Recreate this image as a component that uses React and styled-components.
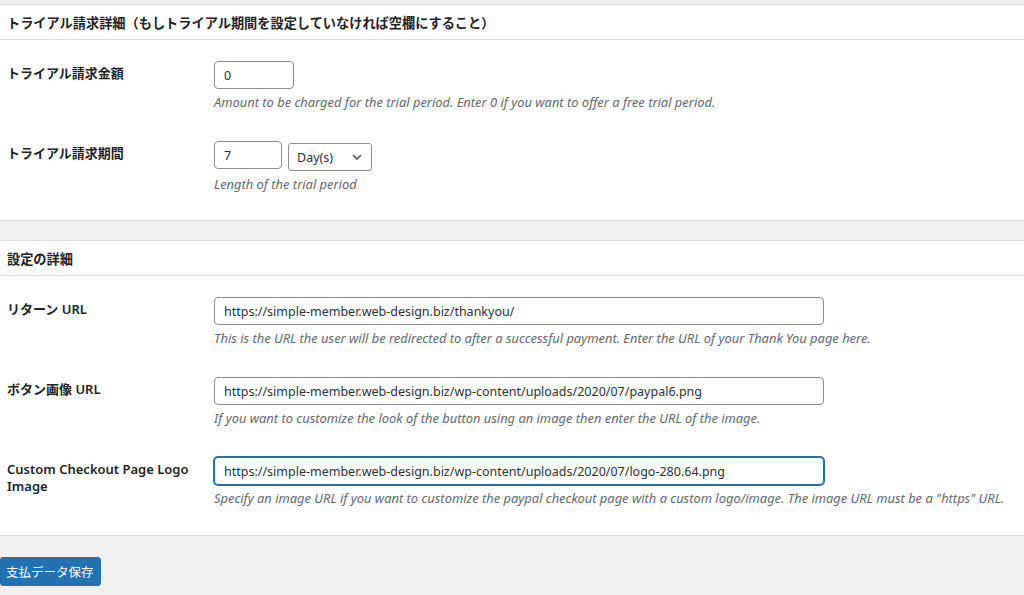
import React from 'react'
import styled, { createGlobalStyle } from 'styled-components'

const GlobalStyle = createGlobalStyle`
  html, body {
    margin: 0;
    padding: 0;
    background: #f0f0f1;
  }
  body {
    font-family: "Noto Sans", "Noto Sans CJK JP", sans-serif;
    color: #1d2327;
  }
`

const Page = styled.div`
  min-height: 595px;
  padding-top: 4px;
  background: #f0f0f1;
  box-sizing: border-box;
`

const Panel = styled.section`
  background: #fff;
  border-top: 1px solid #dcdcde;
  border-bottom: 1px solid #dcdcde;
  margin-bottom: 19px;
`

const PanelHeader = styled.h2`
  margin: 0;
  height: 34px;
  padding: 0 7px;
  display: flex;
  align-items: center;
  font-size: 13.2px;
  font-weight: 700;
  border-bottom: 1px solid #dcdcde;
`

const PanelBody = styled.div`
  padding: 6px 0 ${p => p.$bottom}px;
`

const FieldRow = styled.div`
  display: grid;
  grid-template-columns: 197px 1fr;
  padding-left: 7px;
`

const Label = styled.div`
  padding: 19px 10px 0 0;
  font-size: 13px;
  line-height: 17px;
  font-weight: 600;
`

const Field = styled.div`
  padding: 15px 0 15px 10px;
`

const Controls = styled.div`
  display: flex;
  align-items: flex-start;
  gap: 6px;
`

const TextInput = styled.input`
  box-sizing: border-box;
  display: block;
  width: ${p => p.$width}px;
  height: 28px;
  padding: 0 9px;
  border: 1px solid ${p => (p.$focused ? '#2271b1' : '#8c8f94')};
  box-shadow: ${p => (p.$focused ? '0 0 0 1px #2271b1' : 'none')};
  border-radius: 4px;
  font-family: inherit;
  font-size: 12.5px;
  color: #2c3338;
  background: #fff;
  outline: none;
`

const SelectBox = styled.div`
  box-sizing: border-box;
  width: 84px;
  height: 28px;
  margin-top: 2px;
  padding: 0 8px;
  border: 1px solid #8c8f94;
  border-radius: 3px;
  display: flex;
  align-items: center;
  justify-content: space-between;
  font-size: 12.5px;
  color: #2c3338;
`

const Description = styled.p`
  margin: 4px 0 0;
  font-size: 12.9px;
  line-height: 18px;
  font-style: italic;
  color: #646970;
  white-space: nowrap;
`

const Footer = styled.div`
  padding-top: 2px;
`

const SaveButton = styled.button`
  height: 29px;
  padding: 0 6px 0 5px;
  background: #2271b1;
  border: 1px solid #2271b1;
  border-radius: 3px;
  color: #fff;
  font-family: inherit;
  font-size: 12.5px;
  cursor: pointer;
`

const Chevron = () => (
  <svg width="12" height="8" viewBox="0 0 12 8">
    <path d="M2 2l4 4 4-4" fill="none" stroke="#50575e" strokeWidth="1.6" />
  </svg>
)

const Row = ({ label, children, description }) => (
  <FieldRow>
    <Label>{label}</Label>
    <Field>
      {children}
      <Description>{description}</Description>
    </Field>
  </FieldRow>
)

const App = () => (
  <Page>
    <GlobalStyle />
    <Panel>
      <PanelHeader>トライアル請求詳細（もしトライアル期間を設定していなければ空欄にすること）</PanelHeader>
      <PanelBody $bottom={12}>
        <Row
          label="トライアル請求金額"
          description="Amount to be charged for the trial period. Enter 0 if you want to offer a free trial period."
        >
          <TextInput $width={80} defaultValue="0" />
        </Row>
        <Row label="トライアル請求期間" description="Length of the trial period">
          <Controls>
            <TextInput $width={68} defaultValue="7" />
            <SelectBox>
              <span>Day(s)</span>
              <Chevron />
            </SelectBox>
          </Controls>
        </Row>
      </PanelBody>
    </Panel>
    <Panel>
      <PanelHeader>設定の詳細</PanelHeader>
      <PanelBody $bottom={13}>
        <Row
          label="リターン URL"
          description="This is the URL the user will be redirected to after a successful payment. Enter the URL of your Thank You page here."
        >
          <TextInput $width={610} defaultValue="https://simple-member.web-design.biz/thankyou/" />
        </Row>
        <Row
          label="ボタン画像 URL"
          description="If you want to customize the look of the button using an image then enter the URL of the image."
        >
          <TextInput $width={610} defaultValue="https://simple-member.web-design.biz/wp-content/uploads/2020/07/paypal6.png" />
        </Row>
        <Row
          label="Custom Checkout Page Logo Image"
          description={'Specify an image URL if you want to customize the paypal checkout page with a custom logo/image. The image URL must be a "https" URL.'}
        >
          <TextInput
            $width={610}
            $focused
            defaultValue="https://simple-member.web-design.biz/wp-content/uploads/2020/07/logo-280.64.png"
          />
        </Row>
      </PanelBody>
    </Panel>
    <Footer>
      <SaveButton>支払データ保存</SaveButton>
    </Footer>
  </Page>
)

export default App
